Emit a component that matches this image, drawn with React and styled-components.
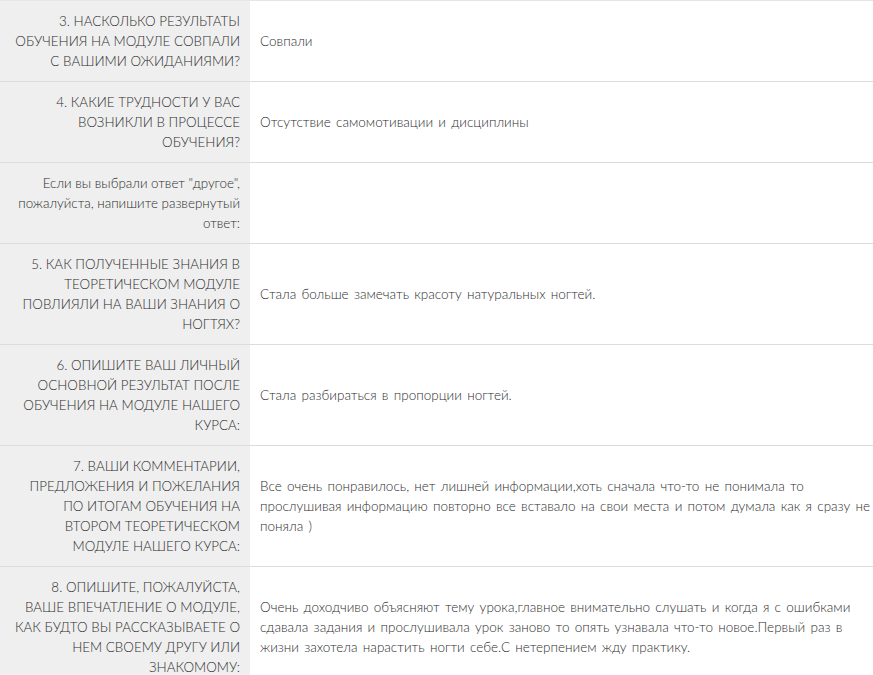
import React from "react";
import styled, { createGlobalStyle } from "styled-components";

const rows = [
  {
    q: ["3. НАСКОЛЬКО РЕЗУЛЬТАТЫ", "ОБУЧЕНИЯ НА МОДУЛЕ СОВПАЛИ", "С ВАШИМИ ОЖИДАНИЯМИ?"],
    a: ["Совпали"],
  },
  {
    q: ["4. КАКИЕ ТРУДНОСТИ У ВАС", "ВОЗНИКЛИ В ПРОЦЕССЕ", "ОБУЧЕНИЯ?"],
    a: ["Отсутствие самомотивации и дисциплины"],
  },
  {
    q: ['Если вы выбрали ответ "другое",', "пожалуйста, напишите развернутый", "ответ:"],
    a: [],
  },
  {
    q: ["5. КАК ПОЛУЧЕННЫЕ ЗНАНИЯ В", "ТЕОРЕТИЧЕСКОМ МОДУЛЕ", "ПОВЛИЯЛИ НА ВАШИ ЗНАНИЯ О", "НОГТЯХ?"],
    a: ["Стала больше замечать красоту натуральных ногтей."],
  },
  {
    q: ["6. ОПИШИТЕ ВАШ ЛИЧНЫЙ", "ОСНОВНОЙ РЕЗУЛЬТАТ ПОСЛЕ", "ОБУЧЕНИЯ НА МОДУЛЕ НАШЕГО", "КУРСА:"],
    a: ["Стала разбираться в пропорции ногтей."],
  },
  {
    q: [
      "7. ВАШИ КОММЕНТАРИИ,",
      "ПРЕДЛОЖЕНИЯ И ПОЖЕЛАНИЯ",
      "ПО ИТОГАМ ОБУЧЕНИЯ НА",
      "ВТОРОМ ТЕОРЕТИЧЕСКОМ",
      "МОДУЛЕ НАШЕГО КУРСА:",
    ],
    a: [
      "Все очень понравилось, нет лишней информации,хоть сначала что-то не понимала то",
      "прослушивая информацию повторно все вставало на свои места и потом думала как я сразу не",
      "поняла )",
    ],
  },
  {
    q: [
      "8. ОПИШИТЕ, ПОЖАЛУЙСТА,",
      "ВАШЕ ВПЕЧАТЛЕНИЕ О МОДУЛЕ,",
      "КАК БУДТО ВЫ РАССКАЗЫВАЕТЕ О",
      "НЕМ СВОЕМУ ДРУГУ ИЛИ",
      "ЗНАКОМОМУ:",
    ],
    a: [
      "Очень доходчиво объясняют тему урока,главное внимательно слушать и когда я с ошибками",
      "сдавала задания и прослушивала урок заново то опять узнавала что-то новое.Первый раз в",
      "жизни захотела нарастить ногти себе.С нетерпением жду практику.",
    ],
  },
];

function App() {
  return (
    <>
      <GlobalStyle />
      <Table>
        {rows.map((r, i) => (
          <Row key={i}>
            <Question>
              {r.q.map((line, j) => (
                <Line key={j}>{line}</Line>
              ))}
            </Question>
            <Answer>
              <div>
                {r.a.map((line, j) => (
                  <Line key={j}>{line}</Line>
                ))}
              </div>
            </Answer>
          </Row>
        ))}
      </Table>
    </>
  );
}

const GlobalStyle = createGlobalStyle`
  body {
    margin: 0;
    background: #fff;
    font-family: Lato, "Open Sans", sans-serif;
    color: #333;
  }
`;

const Table = styled.div`
  width: 873px;
  border-top: 1px solid #e6e6e6;
`;

const Row = styled.div`
  display: grid;
  grid-template-columns: 250px 1fr;
  border-bottom: 1px solid #dcdcdc;
`;

const Line = styled.div`
  white-space: nowrap;
`;

const Question = styled.div`
  background: #efefef;
  padding: 10px;
  text-align: right;
  font-size: 13.4px;
  font-weight: 300;
  line-height: 20px;
  color: #2e2e2e;
`;

const Answer = styled.div`
  padding: 10px 0 10px 10px;
  display: flex;
  align-items: center;
  font-size: 13.5px;
  font-weight: 300;
  word-spacing: 1.6px;
  line-height: 20px;
  color: #2e2e2e;
`;

export default App;
